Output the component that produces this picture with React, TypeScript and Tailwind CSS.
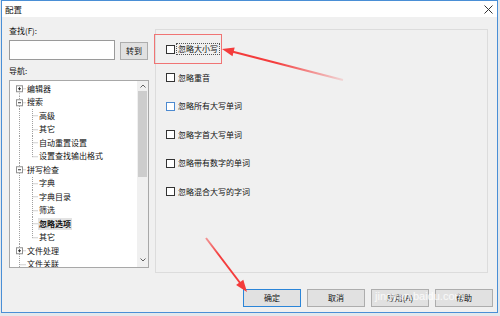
import React from 'react';

type Node = {
  label: string;
  level: 0 | 1;
  exp?: 'plus' | 'minus';
  first?: boolean;
  last?: boolean;
  selected?: boolean;
};

const tree: Node[] = [
  { label: '编辑器', level: 0, exp: 'plus', first: true },
  { label: '搜索', level: 0, exp: 'minus' },
  { label: '高级', level: 1 },
  { label: '其它', level: 1 },
  { label: '自动重置设置', level: 1 },
  { label: '设置查找输出格式', level: 1, last: true },
  { label: '拼写检查', level: 0, exp: 'minus' },
  { label: '字典', level: 1 },
  { label: '字典目录', level: 1 },
  { label: '筛选', level: 1 },
  { label: '忽略选项', level: 1, selected: true },
  { label: '其它', level: 1, last: true },
  { label: '文件处理', level: 0, exp: 'plus' },
  { label: '文件关联', level: 0 },
];

const options = ['忽略大小写', '忽略重音', '忽略所有大写单词', '忽略字首大写单词', '忽略带有数字的单词', '忽略混合大写的字词'];

const H = 13.5;
const C = H / 2;

function RootCell({ node }: { node: Node }) {
  return (
    <svg width={17} height={H} viewBox={`0 0 17 ${H}`} className="shrink-0">
      <line x1={9.5} x2={9.5} y1={node.first ? C : 0} y2={H} stroke="#a0a0a0" strokeDasharray="1 1" />
      {node.level === 0 && <line x1={9.5} x2={16} y1={C} y2={C} stroke="#a0a0a0" strokeDasharray="1 1" />}
      {node.exp && (
        <g>
          <rect x={6.5} y={C - 3} width={6} height={6} fill="#fff" stroke="#919191" />
          <line x1={8} x2={11} y1={C} y2={C} stroke="#333" />
          {node.exp === 'plus' && <line x1={9.5} x2={9.5} y1={C - 1.5} y2={C + 1.5} stroke="#333" />}
        </g>
      )}
    </svg>
  );
}

function ChildCell({ node }: { node: Node }) {
  return (
    <svg width={12} height={H} viewBox={`0 0 12 ${H}`} className="shrink-0">
      <line x1={5.5} x2={5.5} y1={0} y2={node.last ? C : H} stroke="#a0a0a0" strokeDasharray="1 1" />
      <line x1={5.5} x2={11} y1={C} y2={C} stroke="#a0a0a0" strokeDasharray="1 1" />
    </svg>
  );
}

function Button({ label, primary }: { label: string; primary?: boolean }) {
  return (
    <div
      className={`w-[58px] h-[18px] flex items-center justify-center text-[8px] text-[#111] bg-[#e1e1e1] border ${
        primary ? 'border-[#2b85d8]' : 'border-[#adadad]'
      }`}
    >
      {label}
    </div>
  );
}

export default function App() {
  return (
    <div className="relative w-[500px] h-[316px] overflow-hidden bg-[#e4e8ec] font-['Noto_Sans_CJK_SC','Noto_Sans',sans-serif]">
      <div className="ml-[1px] w-[497px] h-[313px] border border-[#4a8fd6] bg-[#f0f0f0] flex flex-col">
        {/* title bar */}
        <div className="h-[16px] bg-white flex items-center justify-between pl-[3px] pr-[4px]">
          <span className="text-[8.5px] leading-[12px] text-[#111]">配置</span>
          <svg width={9} height={9} viewBox="0 0 9 9">
            <line x1={0.5} y1={0.5} x2={8.5} y2={8.5} stroke="#333" />
            <line x1={8.5} y1={0.5} x2={0.5} y2={8.5} stroke="#333" />
          </svg>
        </div>

        {/* main */}
        <div className="flex h-[256px] pl-[7px]">
          <div className="w-[140px] flex flex-col pt-[8px]">
            <div className="h-[12px] text-[8px] leading-[12px] text-[#111]">查找(F):</div>
            <div className="mt-[3px] h-[20px] flex items-end">
              <div className="w-[106px] h-[20px] bg-white border border-[#9a9a9a]" />
              <div className="ml-[5px] w-[28px] h-[18px] bg-[#e1e1e1] border border-[#adadad] flex items-center justify-center text-[8px] text-[#111]">
                转到
              </div>
            </div>
            <div className="mt-[5px] h-[12px] text-[8px] leading-[12px] text-[#111]">导航:</div>
            <div className="mt-[3px] h-[188px] bg-white border border-[#a8a8a8] flex overflow-hidden">
              <div className="flex-1 flex flex-col pt-[1px] overflow-hidden">
                {tree.map((n, i) => (
                  <div key={i} className="flex items-center h-[13.5px] shrink-0">
                    <RootCell node={n} />
                    {n.level === 1 && <ChildCell node={n} />}
                    <span
                      className={`text-[8px] leading-[12px] whitespace-nowrap text-[#111] ${
                        n.selected ? 'bg-[#e3e3e3] px-[1px] -ml-[1px] font-semibold' : ''
                      }`}
                    >
                      {n.label}
                    </span>
                  </div>
                ))}
              </div>
              <div className="w-[11px] flex flex-col bg-[#f0f0f0]">
                <div className="h-[10px] flex items-center justify-center">
                  <svg width={6} height={4} viewBox="0 0 6 4">
                    <polyline points="0.5,3.5 3,1 5.5,3.5" fill="none" stroke="#606060" />
                  </svg>
                </div>
                <div className="h-[86px] mx-[1px] bg-[#cdcdcd]" />
                <div className="flex-1" />
                <div className="h-[10px] flex items-center justify-center mb-[2px]">
                  <svg width={6} height={4} viewBox="0 0 6 4">
                    <polyline points="0.5,0.5 3,3 5.5,0.5" fill="none" stroke="#606060" />
                  </svg>
                </div>
              </div>
            </div>
          </div>

          <div className="ml-[6px] mt-[12px] w-[333px] h-[244px] border border-[#dcdcdc] flex flex-col pt-[5px] pl-[10px]">
            {options.map((o, i) => (
              <div key={o} className="h-[28.5px] flex items-center">
                <div className={`w-[9px] h-[9px] bg-white border ${i === 2 ? 'border-[#4d8ad0]' : 'border-[#333]'}`} />
                <span
                  className={`ml-[1px] px-[1px] text-[8px] leading-[10px] text-[#111] border ${
                    i === 0 ? 'border-dotted border-[#555]' : 'border-transparent'
                  }`}
                >
                  {o}
                </span>
              </div>
            ))}
          </div>
        </div>

        {/* buttons */}
        <div className="mt-[16px] flex justify-end gap-[6px] pr-[4px]">
          <Button label="确定" primary />
          <Button label="取消" />
          <Button label="应用(A)" />
          <Button label="帮助" />
        </div>
      </div>

      {/* annotation: red box */}
      <div className="absolute left-[154px] top-[34px] w-[68px] h-[30px] border border-[#f07474] pointer-events-none" />

      {/* annotation: arrows */}
      <svg className="absolute left-0 top-0 pointer-events-none" width={500} height={316} viewBox="0 0 500 316">
        <defs>
          <linearGradient id="a1" gradientUnits="userSpaceOnUse" x1={343} y1={80} x2={230} y2={51}>
            <stop offset="0" stopColor="#f43c3c" stopOpacity="0.15" />
            <stop offset="0.6" stopColor="#f43c3c" stopOpacity="1" />
          </linearGradient>
          <linearGradient id="a2" gradientUnits="userSpaceOnUse" x1={206} y1={238} x2={240} y2={282}>
            <stop offset="0" stopColor="#f43c3c" stopOpacity="0.5" />
            <stop offset="0.4" stopColor="#f43c3c" stopOpacity="1" />
          </linearGradient>
        </defs>
        <line x1={343} y1={80} x2={232} y2={51.5} stroke="url(#a1)" strokeWidth={2} />
        <polygon points="222,49 234.7,47.6 232.5,56.3" fill="#f43c3c" />
        <line x1={206} y1={238} x2={240.5} y2={283.5} stroke="url(#a2)" strokeWidth={2} />
        <polygon points="247,292 243.3,279.7 236.1,285.1" fill="#f43c3c" />
      </svg>

      {/* watermark */}
      <div className="absolute left-[375px] top-[289px] text-[11px] leading-[14px] text-white/80 font-['Liberation_Sans',sans-serif] pointer-events-none">
        jingyan.baidu.com
      </div>
    </div>
  );
}
